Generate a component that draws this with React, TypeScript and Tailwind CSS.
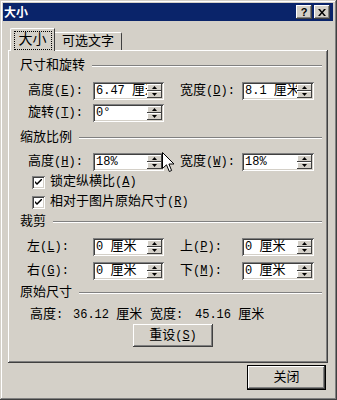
import { ReactNode } from 'react'

// classic win2000 bevels
const raised =
  'shadow-[inset_-1px_-1px_#404040,inset_1px_1px_#ffffff,inset_-2px_-2px_#808080,inset_2px_2px_#d4d0c8]'
const sunken =
  'shadow-[inset_1px_1px_#808080,inset_-1px_-1px_#ffffff,inset_2px_2px_#404040,inset_-2px_-2px_#d4d0c8]'
const smallRaised = 'shadow-[inset_-1px_-1px_#404040,inset_1px_1px_#ffffff]'

// ascii runs are a bit narrower than the cjk glyphs, like SimSun
function Txt({ s }: { s: string }) {
  const parts = s.match(/[\x20-\x7e°]+|[^\x20-\x7e°]+/g) ?? []
  return (
    <>
      {parts.map((p, i) =>
        /[\x20-\x7e°]/.test(p[0]) ? (
          <span key={i} className="text-[12px]">
            {p}
          </span>
        ) : (
          <span key={i}>{p}</span>
        )
      )}
    </>
  )
}

function Key({ t, k, colon = true }: { t: string; k: string; colon?: boolean }) {
  return (
    <>
      {t}
      <span className="text-[12px]">
        (<u>{k}</u>){colon ? ':' : ''}
      </span>
    </>
  )
}

function Arrow({ up }: { up?: boolean }) {
  return (
    <svg width="5" height="3" viewBox="0 0 5 3">
      <polygon points={up ? '0,3 2.5,0 5,3' : '0,0 5,0 2.5,3'} fill="#000" />
    </svg>
  )
}

function Spin({ value, w = 71 }: { value: string; w?: number }) {
  return (
    <div className={`flex h-[18px] bg-white ${sunken} ${w === 72 ? 'w-[72px]' : 'w-[71px]'}`}>
      <div className="flex-1 overflow-hidden whitespace-nowrap pl-[3px] pt-[2px] text-[13px] leading-[14px]">
        <Txt s={value} />
      </div>
      <div className="my-[2px] mr-[2px] flex w-[15px] flex-col">
        <div className={`flex h-[7px] items-center justify-center bg-[#d4d0c8] ${smallRaised}`}>
          <Arrow up />
        </div>
        <div className={`flex h-[7px] items-center justify-center bg-[#d4d0c8] ${smallRaised}`}>
          <Arrow />
        </div>
      </div>
    </div>
  )
}

function Label({ children, w }: { children: ReactNode; w: string }) {
  return <div className={`shrink-0 whitespace-nowrap text-[13px] leading-[14px] ${w}`}>{children}</div>
}

function Heading({ title, h }: { title: string; h: string }) {
  return (
    <div className={`flex items-center pl-[12px] pr-[6px] ${h}`}>
      <span className="text-[13px] leading-[14px]">{title}</span>
      <div className="ml-[7px] h-[2px] flex-1 border-t border-b border-t-[#808080] border-b-white" />
    </div>
  )
}

function Check({ children, h }: { children: ReactNode; h: string }) {
  return (
    <div className={`flex items-center pl-[24px] ${h}`}>
      <div className={`flex h-[13px] w-[13px] items-center justify-center bg-white ${sunken}`}>
        <svg width="7" height="7" viewBox="0 0 7 7">
          <path d="M0 2 L0 4 L2 6 L7 1 L7 -1 L2 4 Z" fill="#000" />
        </svg>
      </div>
      <span className="ml-[5px] text-[13px] leading-[14px]">{children}</span>
    </div>
  )
}

function Row({ h, pl = 'pl-[20px]', children }: { h: string; pl?: string; children: ReactNode }) {
  return <div className={`flex items-center ${pl} ${h}`}>{children}</div>
}

export default function App() {
  return (
    <div
      className={`relative h-[400px] w-[337px] bg-[#d4d0c8] p-[3px] pr-[4px] font-[Liberation_Mono,Noto_Sans_CJK_SC,monospace] text-black shadow-[inset_-1px_-1px_#404040,inset_1px_1px_#d4d0c8,inset_-2px_-2px_#808080,inset_2px_2px_#ffffff]`}
    >
      {/* title bar */}
      <div className="flex h-[18px] items-center bg-[#0a246a] pl-[1px] pr-[3px]">
        <span className="font-[Noto_Sans_CJK_SC,sans-serif] text-[12px] font-bold leading-[14px] text-white">大小</span>
        <div className="flex-1" />
        <div className={`flex h-[14px] w-[16px] items-center justify-center bg-[#d4d0c8] ${raised}`}>
          <span className="font-[Liberation_Sans,sans-serif] text-[11px] font-bold leading-[11px]">?</span>
        </div>
        <div className={`ml-[2px] flex h-[14px] w-[16px] items-center justify-center bg-[#d4d0c8] ${raised}`}>
          <svg width="8" height="7" viewBox="0 0 8 7">
            <path d="M0 0 L2 0 L4 2.5 L6 0 L8 0 L5 3.5 L8 7 L6 7 L4 4.5 L2 7 L0 7 L3 3.5 Z" fill="#000" />
          </svg>
        </div>
      </div>

      {/* tabs */}
      <div className="ml-[7px] mt-[7px] flex h-[22px] items-end">
        <div className="relative z-10 -mb-[1px] flex h-[23px] w-[45px] items-center justify-center rounded-tl-[2px] border-l border-t border-r border-white border-r-[#404040] bg-[#d4d0c8]">
          <span className="border border-dotted border-black px-[4px] py-[1px] text-[14px] leading-[15px]">大小</span>
        </div>
        <div className="flex h-[18px] w-[67px] items-center justify-center rounded-tr-[2px] border-t border-r border-t-white border-r-[#404040] text-[13px] leading-[14px]">
          可选文字
        </div>
      </div>

      {/* panel */}
      <div className={`ml-[5px] h-[313px] w-[320px] pt-[2px] ${raised}`}>
        <Heading title="尺寸和旋转" h="h-[28px]" />
        <Row h="h-[22px]">
          <Label w="w-[65px]"><Key t="高度" k="E" /></Label>
          <Spin value="6.47 厘米" />
          <div className="w-[16px]" />
          <Label w="w-[62px]"><Key t="宽度" k="D" /></Label>
          <Spin value="8.1 厘米" w={72} />
        </Row>
        <Row h="h-[21px]">
          <Label w="w-[65px]"><Key t="旋转" k="T" /></Label>
          <Spin value="0°" />
        </Row>

        <Heading title="缩放比例" h="h-[30px]" />
        <Row h="h-[18px]">
          <Label w="w-[65px]"><Key t="高度" k="H" /></Label>
          <Spin value="18%" />
          <div className="w-[16px]" />
          <Label w="w-[62px]"><Key t="宽度" k="W" /></Label>
          <Spin value="18%" w={72} />
        </Row>
        <Check h="h-[22px]"><Key t="锁定纵横比" k="A" colon={false} /></Check>
        <Check h="h-[18px]"><Key t="相对于图片原始尺寸" k="R" colon={false} /></Check>

        <Heading title="裁剪" h="h-[22px]" />
        <Row h="h-[28px]" pl="pl-[19px]">
          <Label w="w-[66px]"><Key t="左" k="L" /></Label>
          <Spin value="0 厘米" />
          <div className="w-[16px]" />
          <Label w="w-[62px]"><Key t="上" k="P" /></Label>
          <Spin value="0 厘米" w={72} />
        </Row>
        <Row h="h-[20px]" pl="pl-[19px]">
          <Label w="w-[66px]"><Key t="右" k="G" /></Label>
          <Spin value="0 厘米" />
          <div className="w-[16px]" />
          <Label w="w-[62px]"><Key t="下" k="M" /></Label>
          <Spin value="0 厘米" w={72} />
        </Row>

        <Heading title="原始尺寸" h="h-[24px]" />
        <Row h="h-[19px]" pl="pl-[22px]">
          <Label w="w-[43px]"><Txt s="高度:" /></Label>
          <Label w="w-[77px]"><Txt s="36.12 厘米" /></Label>
          <Label w="w-[45px]"><Txt s="宽度:" /></Label>
          <Label w="w-auto"><Txt s="45.16 厘米" /></Label>
        </Row>
        <div className="flex h-[23px] pl-[125px]">
          <div className={`flex h-[23px] w-[80px] items-center justify-center bg-[#d4d0c8] text-[13px] leading-[14px] ${raised}`}>
            <Key t="重设" k="S" colon={false} />
          </div>
        </div>
      </div>

      {/* close button */}
      <div className="mt-[2px] flex justify-end pr-[7px]">
        <div className="h-[25px] w-[79px] border border-black">
          <div className={`flex h-full w-full items-center justify-center text-[13px] leading-[14px] ${raised}`}>关闭</div>
        </div>
      </div>

      {/* mouse pointer */}
      <svg className="absolute left-[162px] top-[152px]" width="13" height="21" viewBox="0 0 13 21">
        <path d="M0.5 0.5 L0.5 16.5 L4.5 12.8 L7.3 19.5 L9.6 18.5 L6.9 12 L12 12 Z" fill="#fff" stroke="#000" strokeWidth="1" />
      </svg>
    </div>
  )
}
